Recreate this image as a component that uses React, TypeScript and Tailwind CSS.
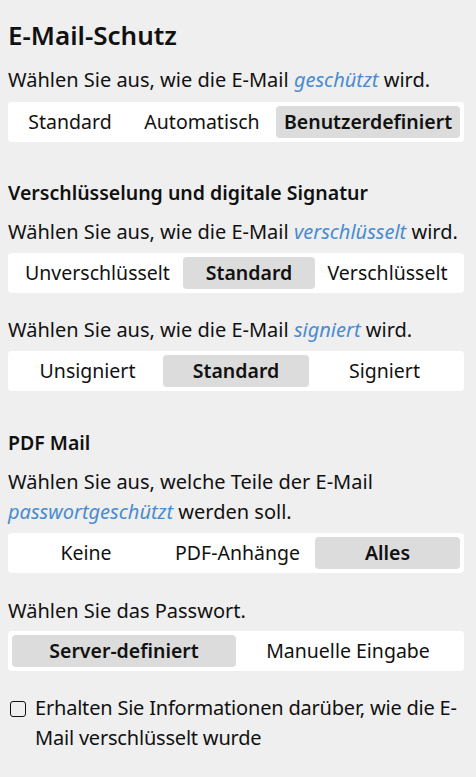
import { useState } from "react"

type Seg = { label: string; w: string }

function Segmented({ items, active }: { items: Seg[]; active: number }) {
  const [sel, setSel] = useState(active)
  return (
    <div className="flex h-10 items-stretch rounded-[4px] bg-white p-1">
      {items.map((it, i) => (
        <button
          key={it.label}
          onClick={() => setSel(i)}
          className={`${it.w} flex items-center justify-center rounded-[4px] text-[19.5px] leading-none text-[#111] ${
            sel === i ? "bg-[#dcdcdc] font-semibold" : ""
          }`}
        >
          {it.label}
        </button>
      ))}
    </div>
  )
}

function Link({ children }: { children: string }) {
  return <span className="italic text-[#4a8bd0]">{children}</span>
}

export default function App() {
  const [info, setInfo] = useState(false)
  return (
    <div
      className="min-h-screen bg-[#efefef] pl-2 pr-3 pt-[18px] text-[#111]"
      style={{ fontFamily: '"Noto Sans", "Open Sans", sans-serif' }}
    >
      <h1 className="text-[26px] font-semibold leading-[34px]">E-Mail-Schutz</h1>
      <p className="mt-[13px] text-[20px] leading-[30px]">
        Wählen Sie aus, wie die E-Mail <Link>geschützt</Link> wird.
      </p>
      <div className="mt-[7px]">
        <Segmented
          active={2}
          items={[
            { label: "Standard", w: "w-[116px]" },
            { label: "Automatisch", w: "w-[148px]" },
            { label: "Benutzerdefiniert", w: "w-[184px]" },
          ]}
        />
      </div>

      <h2 className="mt-[37px] text-[19.5px] font-semibold leading-[28px]">
        Verschlüsselung und digitale Signatur
      </h2>
      <p className="mt-[10px] text-[20px] leading-[30px]">
        Wählen Sie aus, wie die E-Mail <Link>verschlüsselt</Link> wird.
      </p>
      <div className="mt-[6px]">
        <Segmented
          active={1}
          items={[
            { label: "Unverschlüsselt", w: "w-[171px]" },
            { label: "Standard", w: "w-[132px]" },
            { label: "Verschlüsselt", w: "w-[145px]" },
          ]}
        />
      </div>
      <p className="mt-[22px] text-[20px] leading-[30px]">
        Wählen Sie aus, wie die E-Mail <Link>signiert</Link> wird.
      </p>
      <div className="mt-[6px]">
        <Segmented
          active={1}
          items={[
            { label: "Unsigniert", w: "w-[151px]" },
            { label: "Standard", w: "w-[146px]" },
            { label: "Signiert", w: "w-[151px]" },
          ]}
        />
      </div>

      <h2 className="mt-[38px] text-[19.5px] font-semibold leading-[28px]">PDF Mail</h2>
      <p className="mt-[10px] text-[20px] leading-[30px]">
        Wählen Sie aus, welche Teile der E-Mail <Link>passwortgeschützt</Link> werden soll.
      </p>
      <div className="mt-[6px]">
        <Segmented
          active={2}
          items={[
            { label: "Keine", w: "w-[148px]" },
            { label: "PDF-Anhänge", w: "w-[155px]" },
            { label: "Alles", w: "w-[145px]" },
          ]}
        />
      </div>
      <p className="mt-[23px] text-[20px] leading-[30px]">Wählen Sie das Passwort.</p>
      <div className="mt-[5px]">
        <Segmented
          active={0}
          items={[
            { label: "Server-definiert", w: "w-[224px]" },
            { label: "Manuelle Eingabe", w: "w-[224px]" },
          ]}
        />
      </div>

      <label className="mt-[22px] flex cursor-pointer items-start gap-[9px] pb-6">
        <span className="mt-[8px] ml-[2px] flex h-4 w-4 shrink-0 items-center justify-center rounded-[3px] border-[1.5px] border-[#111]">
          {info && <span className="text-[12px] leading-none">✓</span>}
        </span>
        <input type="checkbox" className="hidden" checked={info} onChange={(e) => setInfo(e.target.checked)} />
        <span className="text-[20px] leading-[30px] tracking-[-0.2px]">
          Erhalten Sie Informationen darüber, wie die E-Mail verschlüsselt wurde
        </span>
      </label>
    </div>
  )
}
